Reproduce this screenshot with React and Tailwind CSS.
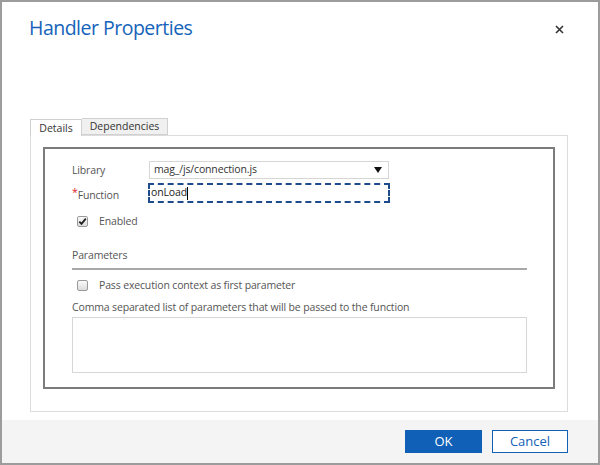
import { useState } from "react";

const font = { fontFamily: '"Open Sans", "Noto Sans", "Liberation Sans", sans-serif' };

const Checkbox = ({ checked }) => (
  <span className="w-[11px] h-[11px] rounded-[2px] border border-[#9a9a9a] bg-gradient-to-b from-[#fafafa] to-[#dcdcdc] flex items-center justify-center">
    {checked && (
      <svg width="9" height="9" viewBox="0 0 9 9">
        <path d="M1.3 4.6 L3.5 6.9 L7.8 1.6" stroke="#222" strokeWidth="1.8" fill="none" />
      </svg>
    )}
  </span>
);

const App = () => {
  const [enabled] = useState(true);

  return (
    <div
      className="w-[600px] h-[465px] bg-white border-2 border-[#9c9c9c] flex flex-col text-[#444]"
      style={font}
    >
      {/* header */}
      <div className="flex justify-between items-start pl-[27px] pr-[34px] pt-[10px]">
        <h1 className="text-[19.5px] leading-[32px] text-[#1563ba] tracking-[-0.5px]">
          Handler Properties
        </h1>
        <button className="mt-[13px] text-[#333]">
          <svg width="9" height="9" viewBox="0 0 9 9">
            <path d="M1 1 L8 8 M8 1 L1 8" stroke="#333" strokeWidth="1.6" />
          </svg>
        </button>
      </div>

      {/* tabs */}
      <div className="mt-[74px] pl-[28px] flex text-[10.5px] leading-[15px]">
        <div className="w-[52px] h-[17px] border border-b-0 border-[#d0d0d0] bg-white flex items-center justify-center text-[#333] relative top-px">
          Details
        </div>
        <div className="w-[86px] h-[17px] border border-l-0 border-[#d0d0d0] bg-[#f0f0f0] flex items-center justify-center text-[#333]">
          Dependencies
        </div>
      </div>

      {/* panel */}
      <div className="ml-[28px] mr-[30px] border border-[#dcdcdc] pt-[11px] pb-[22px] px-[12px]">
        <div className="border-2 border-[#7c7c7c] pl-[27px] pr-[26px] pt-[12px] pb-[14px] text-[10.5px] tracking-[-0.15px] h-[242px]">
          <div className="flex items-center h-[18px]">
            <span className="w-[77px] text-[#555] pt-[2px]">Library</span>
            <div className="w-[240px] h-[18px] border border-[#d6d6d6] flex items-center justify-between pl-[4px] pr-[6px] text-[#333]">
              <span>mag_/js/connection.js</span>
              <svg width="8" height="7" viewBox="0 0 8 7">
                <path d="M0 0 L8 0 L4 6 Z" fill="#111" />
              </svg>
            </div>
          </div>
          <div className="flex items-center h-[20px] mt-[4px]">
            <span className="w-[76px] text-[#555] pt-[6px]">
              <span className="text-[#e0201f] relative -top-[3px]">*</span>Function
            </span>
            <div className="w-[242px] h-[20px] border-2 border-dashed border-[#1e4b8c] flex items-center pl-[1px] text-[#222]">
              onLoad
              <span className="w-px h-[13px] bg-black" />
            </div>
          </div>
          <div className="flex items-center mt-[11px] pl-[5px] gap-[11px]">
            <Checkbox checked={enabled} />
            <span className="text-[#555]">Enabled</span>
          </div>

          <div className="mt-[18px] text-[#555]">Parameters</div>
          <div className="mt-[4px] h-[2px] bg-[#a8a8a8]" />
          <div className="flex items-center mt-[8px] pl-[5px] gap-[11px]">
            <Checkbox checked={false} />
            <span className="text-[#555]">Pass execution context as first parameter</span>
          </div>
          <div className="mt-[7px] text-[#555]">
            Comma separated list of parameters that will be passed to the function
          </div>
          <div className="mt-[1px] h-[56px] border border-[#d6d6d6]" />
        </div>
      </div>

      {/* footer */}
      <div className="mt-auto h-[43px] bg-[#f4f4f4] flex items-center justify-end gap-[10px] pr-[30px] text-[13px]">
        <button className="w-[77px] h-[23px] bg-[#1160b7] text-white">OK</button>
        <button className="w-[76px] h-[23px] border border-[#1160b7] bg-white text-[#1160b7]">
          Cancel
        </button>
      </div>
    </div>
  );
};

export default App;
